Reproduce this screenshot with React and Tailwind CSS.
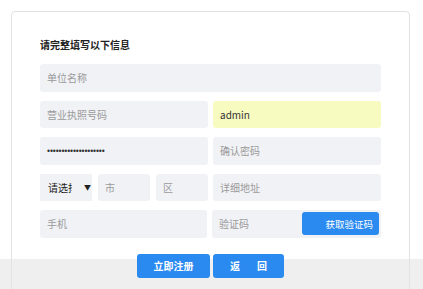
import React from "react";

const font = { fontFamily: '"Noto Sans CJK SC", "Noto Sans", sans-serif' };

function Field({ children, className = "" }) {
  return (
    <div className={`flex items-center h-[27.5px] rounded-[3px] bg-[#f1f2f6] pl-[7px] text-[10px] text-[#9a9a9a] ${className}`}>
      {children}
    </div>
  );
}

export default function App() {
  return (
    <div className="relative w-[423px] h-[289px] overflow-hidden bg-white" style={font}>
      <div className="absolute left-0 right-0 bottom-0 h-[30px] bg-[#efefef] z-0" />
      <div className="relative z-10 ml-[11px] mt-[11px] w-[399px] h-[320px] rounded-[4px] border border-[#e2e2e2] px-[28px] pt-[26px]">
        <div className="text-[10px] leading-[14px] font-bold text-[#222]">请完整填写以下信息</div>
        <div className="mt-[12px] flex flex-col gap-[9px]">
          <Field>单位名称</Field>
          <div className="flex gap-[5px]">
            <Field className="flex-1">营业执照号码</Field>
            <Field className="flex-1 !bg-[#f8fbc0] text-[#333]">admin</Field>
          </div>
          <div className="flex gap-[5px]">
            <Field className="flex-1">
              <span className="text-[#333] text-[8.5px] leading-none font-['Liberation_Sans',sans-serif] tracking-[-0.1px]">••••••••••••••••••••</span>
            </Field>
            <Field className="flex-1">确认密码</Field>
          </div>
          <div className="flex gap-[5px]">
            <div className="flex flex-1 gap-[6px]">
              <div className="flex items-center w-[52px] h-[27.5px] bg-[#f1f2f6] pl-[8px] text-[10px] text-[#222]">
                <span className="w-[24px] overflow-hidden whitespace-nowrap">请选择</span>
                <span className="ml-[12px] text-[7px]">▼</span>
              </div>
              <Field className="w-[52px]">市</Field>
              <Field className="w-[52px]">区</Field>
            </div>
            <Field className="flex-1">详细地址</Field>
          </div>
          <div className="flex gap-[5px]">
            <Field className="flex-1">手机</Field>
            <Field className="flex-1 justify-between pr-[2px]">
              <span>验证码</span>
              <span className="flex items-center justify-end pr-[6px] w-[77px] h-[23px] rounded-[3px] bg-[#2a8af0] text-white text-[9.5px]">获取验证码</span>
            </Field>
          </div>
        </div>
        <div className="mt-[16px] flex justify-center gap-[3px]">
          <div className="flex items-center justify-center w-[73px] h-[24px] rounded-[3px] bg-[#2a8af0] text-white text-[10px] font-bold">立即注册</div>
          <div className="flex items-center justify-center gap-[17px] w-[71px] h-[24px] rounded-[3px] bg-[#2a8af0] text-white text-[10px] font-bold">
            <span>返</span>
            <span>回</span>
          </div>
        </div>
      </div>
    </div>
  );
}
